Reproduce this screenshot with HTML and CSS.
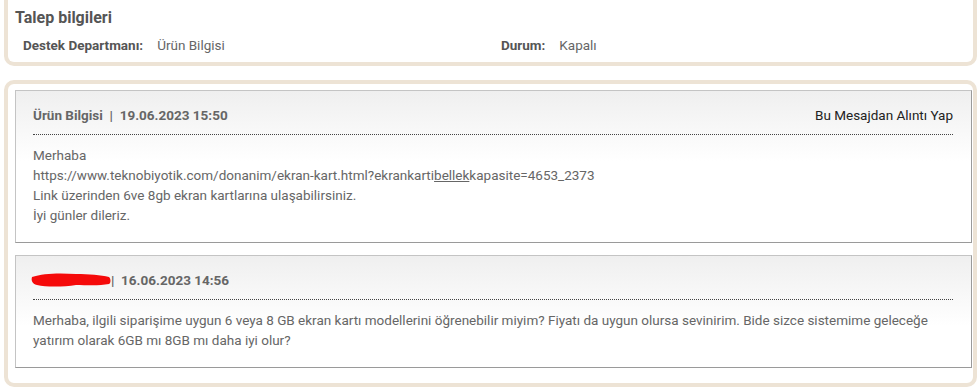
FILE: index.html
```html
<!DOCTYPE html>
<html lang="tr">
<head>
<meta charset="utf-8">
<title>Talep bilgileri</title>
<link rel="stylesheet" href="styles.css">
</head>
<body>
<section class="panel info">
  <h2 class="title">Talep bilgileri</h2>
  <div class="info-row">
    <div class="field"><span class="label">Destek Departmanı:</span><span class="value">Ürün Bilgisi</span></div>
    <div class="field"><span class="label">Durum:</span><span class="value">Kapalı</span></div>
  </div>
</section>
<section class="panel messages">
  <article class="msg">
    <header class="msg-head">
      <span class="meta">Ürün Bilgisi&nbsp;&nbsp;|&nbsp;&nbsp;19.06.2023 15:50</span>
      <a class="quote">Bu Mesajdan Alıntı Yap</a>
    </header>
    <div class="msg-body">
      Merhaba<br>
      https://www.teknobiyotik.com/donanim/ekran-kart.html?ekrankarti<u>bellek</u>kapasite=4653_2373<br>
      Link üzerinden 6ve 8gb ekran kartlarına ulaşabilirsiniz.<br>
      İyi günler dileriz.
    </div>
  </article>
  <article class="msg">
    <header class="msg-head">
      <span class="meta"><svg class="scribble" width="80" height="16" viewBox="0 0 80 16"><path d="M1 5 C12 1 30 1 45 2 C58 2 70 3 78 5 C80 7 80 11 78 12 C68 14 55 13 45 13 C32 15 15 15 6 13 C1 12 0 8 1 5 Z" fill="#f50a0a"/></svg>|&nbsp;&nbsp;16.06.2023 14:56</span>
    </header>
    <div class="msg-body">
      Merhaba, ilgili siparişime uygun 6 veya 8 GB ekran kartı modellerini öğrenebilir miyim? Fiyatı da uygun olursa sevinirim. Bide sizce sistemime geleceğe yatırım olarak 6GB mı 8GB mı daha iyi olur?
    </div>
  </article>
</section>
</body>
</html>
```
FILE: styles.css
```css
html, body {
  margin: 0;
  padding: 0;
  background: #fff;
}
body {
  font-family: Roboto, "Liberation Sans", sans-serif;
  font-size: 13.5px;
  color: #666;
  width: 980px;
  height: 387px;
  overflow: hidden;
}
.panel {
  border: 4px solid #ede3d5;
  border-radius: 10px;
  margin: 0 3px 0 4px;
  background: #fff;
}
.info {
  border-top: none;
  border-radius: 0 0 10px 10px;
  padding: 8px 0 7px 0;
}
.title {
  margin: 0 0 0 7px;
  font-size: 16px;
  line-height: 20px;
  font-weight: 700;
  color: #555;
}
.info-row {
  display: grid;
  grid-template-columns: 478px 1fr;
  margin: 7px 0 0 15px;
  line-height: 20px;
}
.field {
  display: flex;
}
.label {
  font-weight: 700;
  color: #555;
  margin-right: 14px;
}
.value {
  color: #666;
}
.messages {
  margin-top: 14px;
  padding: 6px 1px 15px 7px;
  display: flex;
  flex-direction: column;
  gap: 12px;
}
.msg {
  border: 1px solid #c4c4c4;
  border-right-color: #9a9a9a;
  border-bottom-color: #9a9a9a;
  background: linear-gradient(#efefef, #fff 70px);
}
.msg-head {
  display: flex;
  justify-content: space-between;
  align-items: center;
  margin: 0 18px 0 17px;
  padding: 14px 0 9px;
  line-height: 20px;
  border-bottom: 1px dotted #444;
}
.meta {
  font-weight: 700;
  color: #666;
  display: flex;
  align-items: center;
}
.scribble {
  display: block;
  margin-left: -2px;
}
.quote {
  color: #222;
  cursor: pointer;
}
.msg-body {
  padding: 10px 17px 17px;
  line-height: 20px;
  color: #666;
}
.msg-body u {
  text-decoration: underline;
}
```
